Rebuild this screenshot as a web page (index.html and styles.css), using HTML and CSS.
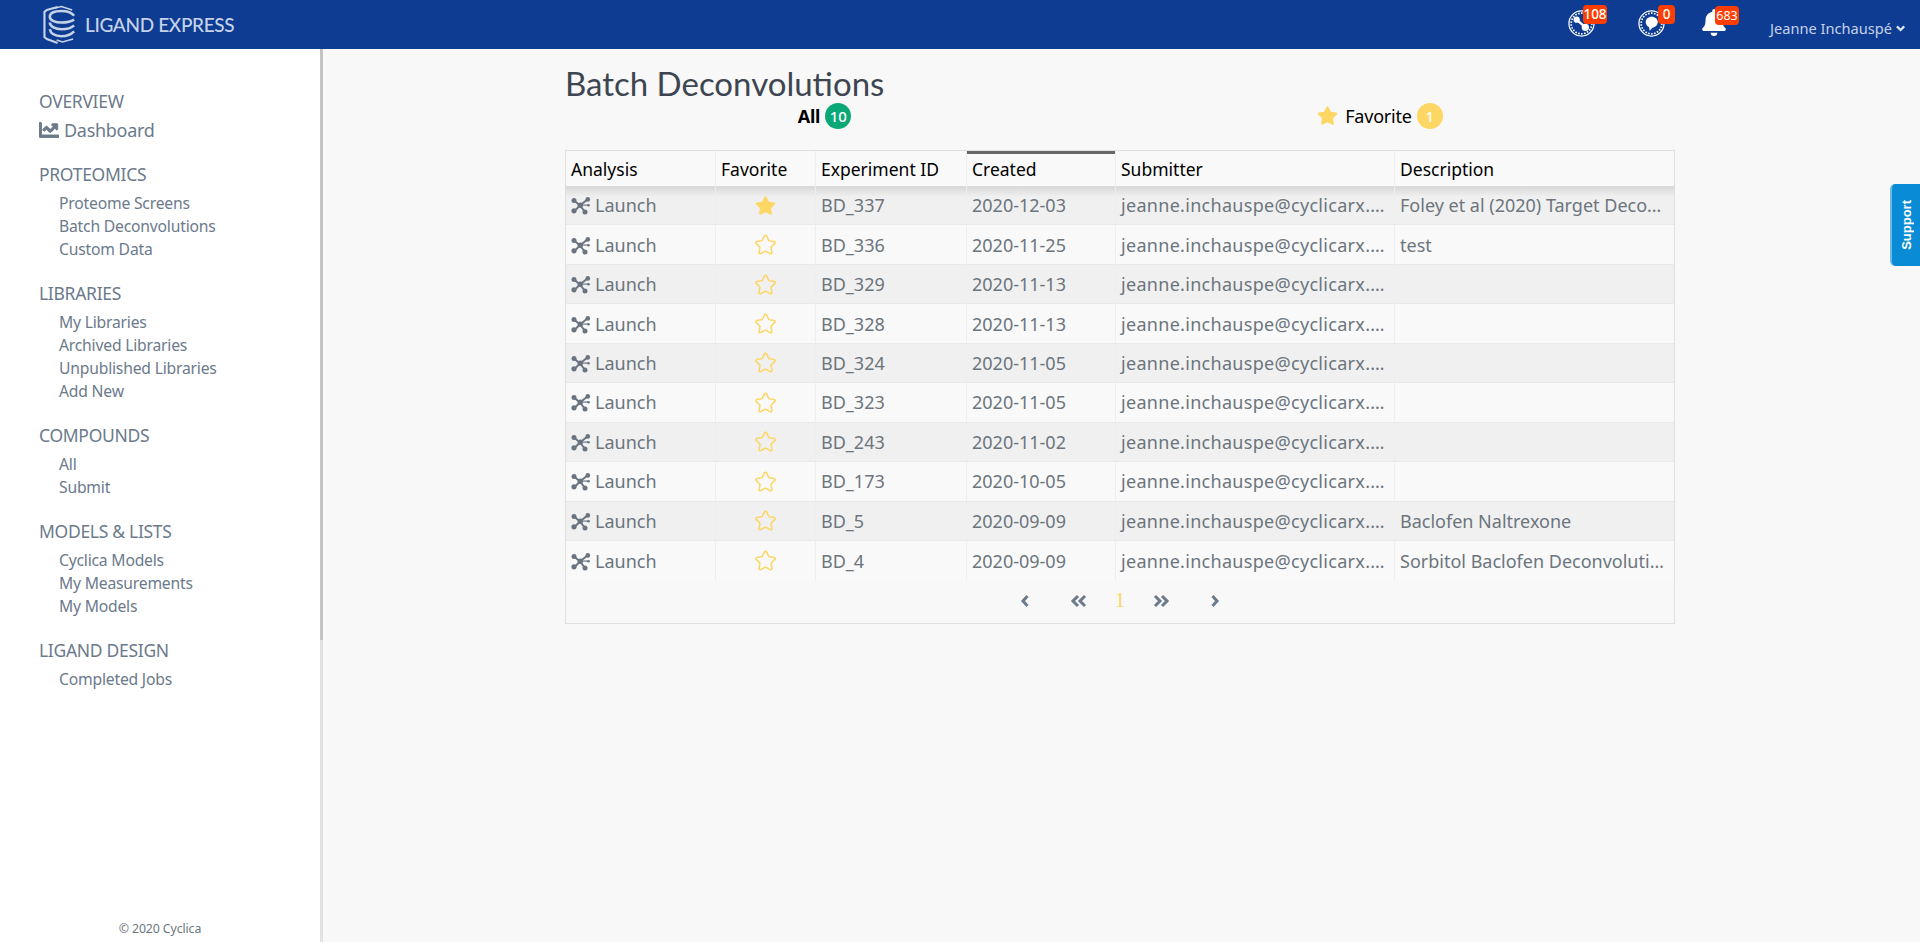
FILE: index.html
```html
<!DOCTYPE html>
<html lang="en">
<head>
<meta charset="utf-8">
<title>Batch Deconvolutions</title>
<link rel="stylesheet" href="styles.css">
</head>
<body>
<svg class="defs" width="0" height="0" aria-hidden="true">
  <symbol id="star" viewBox="-30 -30 636 572"><path d="M259.3 17.8L194 150.2 47.9 171.5c-26.2 3.8-36.7 36.1-17.7 54.6l105.7 103-25 145.5c-4.5 26.3 23.2 46 46.4 33.7L288 439.6l130.7 68.7c23.2 12.2 50.9-7.4 46.4-33.7l-25-145.5 105.7-103c19-18.5 8.5-50.8-17.7-54.6L382 150.2 316.7 17.8c-11.7-23.600-45.600-23.900-57.400 0z"/></symbol>
  <symbol id="mol" viewBox="0 0 20 18">
    <g stroke="currentColor" stroke-width="2" fill="none" stroke-linecap="round"><path d="M3 3.500 9 8.500M17 2 9 8.500M9 8.500 3.500 14M9 8.500 14 15"/></g>
    <g fill="currentColor"><circle cx="3" cy="3.500" r="2.500"/><circle cx="16.800" cy="2.400" r="2.300"/><circle cx="3" cy="13.800" r="2.600"/><circle cx="14" cy="15" r="2.500"/><circle cx="9.300" cy="8.300" r="2.700"/><circle cx="17.500" cy="8.200" r="1.300"/></g>
    <path d="M10 8 17 8.200" stroke="currentColor" stroke-width="1.200"/>
  </symbol>
</svg>

<header class="topbar">
  <a class="brand">
    <svg class="logo" viewBox="0 0 36 40" fill="none" stroke="#c6d2e8">
      <path d="M15 2 4 5 1.500 7v26L4 35l11 4" stroke-width="2.200"/>
      <path d="M10 3.500 19 1.500l11 3.500" stroke-width="1.600"/>
      <path d="M32 11c-3-4-8-5-13-5C12 6 7 8 7 12s6 6 12 6 10-1 13-3" stroke-width="2.600"/>
      <path d="M7 18c0 4 6 7 12 7s10-1 13-4" stroke-width="2.600"/>
      <path d="M7 25c1 5 6 7 12 7 6 0 10-2 13-5" stroke-width="2.600"/>
      <path d="M14 36l6 2 11-3" stroke-width="1.600"/>
    </svg>
    <span class="brand-name">LIGAND EXPRESS</span>
  </a>
  <div class="top-actions">
    <div class="top-icon ti-a">
      <svg class="ring" viewBox="0 0 28 28" fill="none" stroke="#fff">
        <circle cx="14" cy="14" r="13" stroke-width="1.300"/>
        <circle cx="14" cy="14" r="10.700" stroke-width="1.800" stroke-dasharray="1.600 1.500"/>
        <path d="M9 10 18 18" stroke-width="2.400"/>
        <circle cx="9" cy="10" r="3.200" fill="#fff" stroke="none"/>
        <circle cx="18" cy="18" r="3.800" fill="#fff" stroke="none"/>
      </svg>
      <span class="badge">108</span>
    </div>
    <div class="top-icon ti-b">
      <svg class="ring" viewBox="0 0 28 28" fill="none" stroke="#fff">
        <circle cx="14" cy="14" r="13" stroke-width="1.300"/>
        <circle cx="14" cy="14" r="10.700" stroke-width="1.800" stroke-dasharray="1.600 1.500"/>
        <path d="M14 7c4 0 6.500 2.500 6.500 5.500S18 18 15 18.500L12 21.500l-.5-3.500C9 16.500 8 14.500 8 12.500 8 9.500 10.500 7 14 7z" fill="#fff" stroke="none"/>
      </svg>
      <span class="badge">0</span>
    </div>
    <div class="top-icon ti-c">
      <svg class="bell" viewBox="0 0 448 512" fill="#fff"><path d="M224 512c35.32 0 63.97-28.65 63.97-64H160.03c0 35.35 28.65 64 63.97 64zm215.39-149.71c-19.32-20.76-55.47-51.99-55.47-154.29 0-77.7-54.48-139.9-127.94-155.16V32c0-17.67-14.32-32-31.98-32s-31.98 14.33-31.98 32v20.84C118.56 68.1 64.08 130.3 64.08 208c0 102.3-36.15 133.53-55.47 154.29-6 6.45-8.66 14.16-8.61 21.71.11 16.4 12.98 32 32.1 32h383.8c19.12 0 32-15.6 32.1-32 .05-7.55-2.61-15.27-8.61-21.71z"/></svg>
      <span class="badge badge-thin">683</span>
    </div>
    <div class="user">Jeanne Inchauspé
      <svg class="user-chev" viewBox="0 0 10 7" fill="none" stroke="#dfe6f3" stroke-width="2.400"><path d="M1 1.200 5 5.200 9 1.200"/></svg>
    </div>
  </div>
</header>

<div class="page">
  <aside class="sidebar">
    <span class="side-thumb"></span>
    <nav class="side-nav">
      <section class="side-sec">
        <h2 class="side-head side-head-tight">OVERVIEW</h2>
        <a class="side-dash">
          <svg class="dash-icon" viewBox="0 0 512 512" fill="currentColor" stroke="currentColor" stroke-width="24"><path d="M496 384H64V80c0-8.84-7.16-16-16-16H16C7.16 64 0 71.16 0 80v336c0 17.67 14.33 32 32 32h464c8.84 0 16-7.16 16-16v-32c0-8.84-7.16-16-16-16zM464 96H345.94c-21.38 0-32.09 25.85-16.97 40.97l32.4 32.4L288 242.75l-73.37-73.37c-12.5-12.5-32.76-12.5-45.25 0l-68.69 68.69c-6.25 6.25-6.25 16.38 0 22.63l22.62 22.62c6.25 6.25 16.38 6.25 22.63 0L192 237.25l73.37 73.37c12.5 12.5 32.76 12.5 45.25 0l96-96 32.4 32.4c15.12 15.12 40.97 4.41 40.97-16.97V112c0-8.84-7.16-16-16-16z"/></svg>
          Dashboard
        </a>
      </section>
      <section class="side-sec">
        <h2 class="side-head">PROTEOMICS</h2>
        <a class="side-link">Proteome Screens</a>
        <a class="side-link">Batch Deconvolutions</a>
        <a class="side-link">Custom Data</a>
      </section>
      <section class="side-sec">
        <h2 class="side-head">LIBRARIES</h2>
        <a class="side-link">My Libraries</a>
        <a class="side-link">Archived Libraries</a>
        <a class="side-link">Unpublished Libraries</a>
        <a class="side-link">Add New</a>
      </section>
      <section class="side-sec">
        <h2 class="side-head">COMPOUNDS</h2>
        <a class="side-link">All</a>
        <a class="side-link">Submit</a>
      </section>
      <section class="side-sec">
        <h2 class="side-head">MODELS &amp; LISTS</h2>
        <a class="side-link">Cyclica Models</a>
        <a class="side-link">My Measurements</a>
        <a class="side-link">My Models</a>
      </section>
      <section class="side-sec">
        <h2 class="side-head">LIGAND DESIGN</h2>
        <a class="side-link">Completed Jobs</a>
      </section>
    </nav>
    <footer class="side-foot">© 2020 Cyclica</footer>
  </aside>

  <main class="content">
    <h1 class="title">Batch Deconvolutions</h1>
    <div class="tabs">
      <div class="tab tab-on">All <span class="pill pill-green">10</span></div>
      <div class="tab"><svg class="tab-star"><use href="#star"/></svg> Favorite <span class="pill pill-yellow">1</span></div>
    </div>
    <div class="grid-box">
      <table class="grid">
        <colgroup><col class="c1"><col class="c2"><col class="c3"><col class="c4"><col class="c5"><col class="c6"></colgroup>
        <thead>
          <tr><th>Analysis</th><th>Favorite</th><th>Experiment ID</th><th class="sorted">Created</th><th>Submitter</th><th>Description</th></tr>
        </thead>
        <tbody>
          <tr><td><svg class="mol"><use href="#mol"/></svg>Launch</td><td class="fav"><svg class="st st-on"><use href="#star"/></svg></td><td>BD_337</td><td>2020-12-03</td><td class="mail">jeanne.inchauspe@cyclicarx.com</td><td>Foley et al (2020) Target Deconvolution</td></tr>
          <tr><td><svg class="mol"><use href="#mol"/></svg>Launch</td><td class="fav"><svg class="st"><use href="#star"/></svg></td><td>BD_336</td><td>2020-11-25</td><td class="mail">jeanne.inchauspe@cyclicarx.com</td><td>test</td></tr>
          <tr><td><svg class="mol"><use href="#mol"/></svg>Launch</td><td class="fav"><svg class="st"><use href="#star"/></svg></td><td>BD_329</td><td>2020-11-13</td><td class="mail">jeanne.inchauspe@cyclicarx.com</td><td></td></tr>
          <tr><td><svg class="mol"><use href="#mol"/></svg>Launch</td><td class="fav"><svg class="st"><use href="#star"/></svg></td><td>BD_328</td><td>2020-11-13</td><td class="mail">jeanne.inchauspe@cyclicarx.com</td><td></td></tr>
          <tr><td><svg class="mol"><use href="#mol"/></svg>Launch</td><td class="fav"><svg class="st"><use href="#star"/></svg></td><td>BD_324</td><td>2020-11-05</td><td class="mail">jeanne.inchauspe@cyclicarx.com</td><td></td></tr>
          <tr><td><svg class="mol"><use href="#mol"/></svg>Launch</td><td class="fav"><svg class="st"><use href="#star"/></svg></td><td>BD_323</td><td>2020-11-05</td><td class="mail">jeanne.inchauspe@cyclicarx.com</td><td></td></tr>
          <tr><td><svg class="mol"><use href="#mol"/></svg>Launch</td><td class="fav"><svg class="st"><use href="#star"/></svg></td><td>BD_243</td><td>2020-11-02</td><td class="mail">jeanne.inchauspe@cyclicarx.com</td><td></td></tr>
          <tr><td><svg class="mol"><use href="#mol"/></svg>Launch</td><td class="fav"><svg class="st"><use href="#star"/></svg></td><td>BD_173</td><td>2020-10-05</td><td class="mail">jeanne.inchauspe@cyclicarx.com</td><td></td></tr>
          <tr><td><svg class="mol"><use href="#mol"/></svg>Launch</td><td class="fav"><svg class="st"><use href="#star"/></svg></td><td>BD_5</td><td>2020-09-09</td><td class="mail">jeanne.inchauspe@cyclicarx.com</td><td>Baclofen Naltrexone</td></tr>
          <tr><td><svg class="mol"><use href="#mol"/></svg>Launch</td><td class="fav"><svg class="st"><use href="#star"/></svg></td><td>BD_4</td><td>2020-09-09</td><td class="mail">jeanne.inchauspe@cyclicarx.com</td><td>Sorbitol Baclofen Deconvolution</td></tr>
        </tbody>
      </table>
      <div class="pager">
        <a class="pg pg-wide"><svg class="chev" viewBox="0 0 10 14"><path d="M7.500 2 3 7l4.500 5"/></svg></a>
        <a class="pg"><svg class="chev2" viewBox="0 0 18 14"><path d="M8 2 3 7l5 5M15 2l-5 5 5 5"/></svg></a>
        <a class="pg pg-num">1</a>
        <a class="pg"><svg class="chev2" viewBox="0 0 18 14"><path d="M3 2l5 5-5 5M10 2l5 5-5 5"/></svg></a>
        <a class="pg pg-wide"><svg class="chev" viewBox="0 0 10 14"><path d="M2.500 2 7 7l-4.500 5"/></svg></a>
      </div>
    </div>
  </main>
</div>

<a class="support"><span class="support-text">Support</span></a>
</body>
</html>
```

FILE: styles.css
```css
* { box-sizing: border-box; }
html, body { margin: 0; height: 942px; overflow: hidden; }
body { font-family: "Noto Sans", "Liberation Sans", sans-serif; background: #f8f8f8; color: #6c757d; }
.defs { position: absolute; }

.topbar { height: 49px; background: #0d3c92; display: flex; justify-content: space-between; align-items: center; padding: 0 15px 0 43px; }
.brand { display: flex; align-items: center; gap: 7px; }
.logo { width: 35px; height: 41px; }
.brand-name { font-family: Lato, sans-serif; font-size: 19px; font-weight: 500; color: #c6d2e8; letter-spacing: -0.35px; }
.top-actions { display: flex; align-items: center; height: 49px; }
.top-icon { position: relative; height: 49px; }
.ti-a { width: 70px; }
.ti-b { width: 64px; }
.ti-c { width: 68px; }
.ring { position: absolute; left: 0; top: 10px; width: 27px; height: 27px; }
.bell { position: absolute; left: 0; top: 9px; width: 24px; height: 27px; }
.badge { position: absolute; top: 5px; height: 19px; min-width: 17px; padding: 0 2px; background: #ff3d00; border-radius: 4px; color: #fff; font-size: 13.500px; font-weight: 500; line-height: 19px; text-align: center; }
.ti-a .badge { left: 15px; width: 24px; padding: 0; }
.ti-b .badge { left: 20px; }
.ti-c .badge { left: 13px; top: 6px; width: 24px; padding: 0; font-weight: 400; font-size: 12.500px; }
.user { display: flex; align-items: center; gap: 4px; color: #c6d2e8; font-size: 14.600px; width: 135px; padding-top: 7px; white-space: nowrap; }
.user-chev { width: 10px; height: 7px; }

.page { display: flex; height: 893px; }
.sidebar { position: relative; flex: 0 0 323px; background: #fff; border-right: 3px solid #e2e2e2; display: flex; flex-direction: column; }
.side-thumb { position: absolute; right: -3px; top: 0; width: 3px; height: 591px; background: #c4c4c4; }
.side-nav { padding: 40px 0 0 39px; }
.side-sec { margin-bottom: 19.500px; }
.side-head { margin: 0 0 6.500px; font-size: 17.500px; font-weight: 400; line-height: 24px; color: #6c7a8b; letter-spacing: -0.3px; }
.side-head-tight { margin-bottom: 5px; }
.side-dash { display: flex; align-items: center; gap: 5px; height: 24px; font-size: 18px; color: #6c7a8b; letter-spacing: -0.3px; margin-bottom: 2px; }
.dash-icon { width: 20px; height: 20px; }
.side-link { display: block; height: 23px; padding-left: 20px; font-size: 15.700px; line-height: 23px; color: #6c7a8b; letter-spacing: -0.2px; }
.side-foot { margin-top: auto; padding-bottom: 3px; height: 23px; font-size: 12.300px; line-height: 20px; text-align: center; color: #6c757d; letter-spacing: -0.1px; }

.content { flex: 1; padding-left: 242px; }
.title { margin: 15px 0 0; height: 38px; font-family: Lato, sans-serif; font-size: 33px; font-weight: 400; line-height: 38px; color: #3d4650; }
.tabs { width: 1110px; margin-left: -18px; height: 27px; display: grid; grid-template-columns: 1fr 1fr; }
.tab { display: flex; justify-content: center; align-items: center; gap: 5px; font-size: 18px; color: #000; letter-spacing: -0.2px; }
.tab-on { font-weight: 700; }
.tab-star { width: 23px; height: 21px; fill: #fdd663; margin-right: 1px; }
.pill { display: inline-flex; justify-content: center; align-items: center; width: 26px; height: 26px; border-radius: 50%; font-size: 15px; color: #fff; font-weight: 500; letter-spacing: 0; }
.pill-green { background: #0aa876; }
.pill-yellow { background: #fdd663; }

.grid-box { width: 1110px; height: 474px; margin-top: 21px; border: 1px solid #dfdfdf; }
.grid { width: 100%; table-layout: fixed; border-collapse: separate; border-spacing: 0; }
.c1 { width: 150px; } .c2 { width: 100px; } .c3 { width: 151px; } .c4 { width: 149px; } .c5 { width: 279px; } .c6 { width: 279px; }
.grid th { height: 35px; padding: 0 5px; font-size: 17.500px; font-weight: 400; color: #000; text-align: left; border-right: 1px solid #eeeeee; background: #f9f9f9; }
.grid th:last-child, .grid td:last-child { border-right: 0; }
.grid th.sorted { box-shadow: inset 0 3px 0 #666; }
.grid td { height: 39.450px; padding: 0 6px 0 5px; font-size: 18px; color: #6c757d; border-right: 1px solid #eeeeee; border-bottom: 1px solid #e9e9e9; white-space: nowrap; overflow: hidden; text-overflow: ellipsis; }
.grid td.mail { letter-spacing: 0.3px; }
.grid tbody tr:nth-child(odd) td { background: #f0f0f0; }
.grid tbody tr:nth-child(even) td { background: #f9f9f9; }
.grid tbody tr:first-child td { background-image: linear-gradient(rgba(0,0,0,0.1), rgba(0,0,0,0) 11px); }
.grid tbody tr:last-child td { border-bottom: 0; }
.mol { width: 20px; height: 18px; margin-right: 4px; vertical-align: -3px; color: #6a7480; }
.grid .fav { padding: 0; }
.st { display: block; margin: 0 auto; width: 23px; height: 21px; fill: none; stroke: #fdd663; stroke-width: 42px; }
.st-on { fill: #fdd663; stroke: none; }

.pager { display: flex; justify-content: center; align-items: center; height: 41px; }
.pg { display: flex; justify-content: center; align-items: center; width: 41px; height: 24px; }
.pg-wide { width: 67px; }
.pg-num { color: #fdd663; font-size: 20px; font-family: "Liberation Serif", serif; }
.chev { width: 10px; height: 14px; fill: none; stroke: #6c7a8b; stroke-width: 3; }
.chev2 { width: 18px; height: 14px; fill: none; stroke: #6c7a8b; stroke-width: 3; }

.support { position: fixed; right: 0; top: 184px; width: 30px; height: 82px; background: #0a8bd6; border-left: 2px solid #6db9e8; border-radius: 5px 0 0 5px; display: flex; align-items: center; justify-content: center; }
.support-text { writing-mode: vertical-rl; transform: rotate(180deg); color: #fff; font-size: 13px; font-weight: 700; font-family: "Liberation Sans", sans-serif; }
```
